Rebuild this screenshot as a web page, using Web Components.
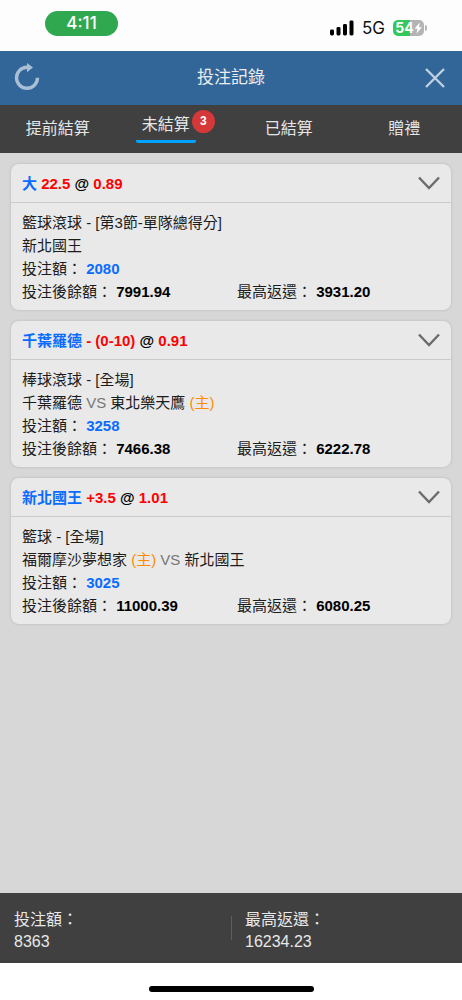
<!DOCTYPE html>
<html lang="zh-Hant">
<head>
<meta charset="utf-8">
<meta name="viewport" content="width=device-width, initial-scale=1">
<title>投注記錄</title>
<style>
  body {
    margin: 0;
    font-family: "Liberation Sans", "Noto Sans CJK TC", sans-serif;
    background: #fff;
  }
</style>
</head>
<body>
<bet-app></bet-app>

<script>
/**
 * Phone status bar: clock, signal, network and battery.
 */
class StatusBar extends HTMLElement {
  constructor () {
    super()
    this.attachShadow({ mode: 'open' })
    this.shadowRoot.innerHTML = `
      <style>
        :host {
          display: flex;
          justify-content: space-between;
          align-items: center;
          box-sizing: border-box;
          height: 51px;
          padding: 0 38px 0 45px;
          background: #fdfdfd;
          font-family: Inter, sans-serif;
          font-size: 17px;
          color: #111;
        }

        .time {
          width: 73px;
          line-height: 25px;
          margin-bottom: 4px;
          border-radius: 13px;
          background: #2fa84f;
          color: #fff;
          font-weight: 500;
          text-align: center;
        }

        .right {
          display: flex;
          align-items: center;
          gap: 8px;
          margin-top: 4px;
          line-height: 20px;
        }

        svg { display: block; }

        .battery {
          position: relative;
          width: 31px;
          height: 16px;
          border-radius: 5px;
          background: linear-gradient(90deg, #34c759 54%, #b4b4b4 54%);
          color: #fff;
          font-size: 14px;
          font-weight: 700;
          line-height: 16px;
          display: flex;
          align-items: center;
          justify-content: center;
        }

        .battery::after {
          content: "";
          position: absolute;
          right: -3px;
          top: 5px;
          width: 2px;
          height: 6px;
          border-radius: 0 2px 2px 0;
          background: #b4b4b4;
        }
      </style>
      <span class="time">4:11</span>
      <div class="right">
        <svg width="24" height="16" viewBox="0 0 24 16" aria-hidden="true">
          <rect x="0" y="9.500" width="4" height="6" rx="1.400"/>
          <rect x="6.500" y="7" width="4" height="8.500" rx="1.400"/>
          <rect x="13" y="4" width="4" height="11.500" rx="1.400"/>
          <rect x="19.500" y="0.500" width="4" height="15" rx="1.400"/>
        </svg>
        <span>5G</span>
        <div class="battery">
          <span>54</span>
          <svg width="8" height="12" viewBox="0 0 8 12" aria-hidden="true">
            <path d="M5.800 0.500 0.500 6.800h3L2.500 11.500 8 5.200H5z" fill="#fff"/>
          </svg>
        </div>
      </div>
    `
  }
}
customElements.define('status-bar', StatusBar)

/**
 * Blue title bar with a refresh and a close button.
 */
class TitleBar extends HTMLElement {
  constructor () {
    super()
    this.attachShadow({ mode: 'open' })
    this.shadowRoot.innerHTML = `
      <style>
        :host {
          display: flex;
          justify-content: space-between;
          align-items: center;
          height: 54px;
          padding: 0 12px;
          background: #326699;
          color: #ececec;
        }

        h1 {
          margin: 0;
          font-size: 17px;
          font-weight: 400;
          line-height: 24px;
        }

        button {
          width: 30px;
          height: 30px;
          padding: 0;
          border: 0;
          background: none;
          cursor: pointer;
        }

        svg { display: block; }
      </style>
      <button type="button" aria-label="重新整理">
        <svg width="30" height="30" viewBox="0 0 30 30" fill="none">
          <path d="M16 4.300H15A10.500 10.500 0 1 0 25.500 14.800" stroke="#a9bfd6" stroke-width="3.400"/>
          <path d="M15 0 21 4.500 15 9.200z" fill="#a9bfd6"/>
        </svg>
      </button>
      <h1><slot></slot></h1>
      <button type="button" aria-label="關閉">
        <svg width="30" height="30" viewBox="0 0 30 30" fill="none">
          <path d="M6 6 24 24M24 6 6 24" stroke="#bfd0e0" stroke-width="2.400"/>
        </svg>
      </button>
    `
  }
}
customElements.define('title-bar', TitleBar)

/**
 * One tab. Attributes: selected, badge.
 */
class BetTab extends HTMLElement {
  constructor () {
    super()
    this.attachShadow({ mode: 'open' })
    this.shadowRoot.innerHTML = `
      <style>
        :host {
          flex: 1;
          display: flex;
        }

        button {
          flex: 1;
          display: flex;
          justify-content: center;
          align-items: center;
          padding: 0;
          border: 0;
          background: none;
          color: #e6e6e6;
          font-family: inherit;
          font-size: 16px;
          line-height: 24px;
          cursor: pointer;
        }

        :host([selected]) .label {
          margin-bottom: 2px;
          padding: 0 6px 3px;
          border-bottom: 3px solid #00a2ff;
          border-radius: 2px;
        }

        .badge {
          width: 23px;
          line-height: 23px;
          margin: -16px -4px 0;
          border-radius: 50%;
          background: #d43838;
          color: #fff;
          font-size: 12px;
          font-weight: 700;
        }
      </style>
      <button type="button"><span class="label"><slot></slot></span></button>
    `
  }

  connectedCallback () {
    const button = this.shadowRoot.querySelector('button')
    button.setAttribute('aria-pressed', this.hasAttribute('selected'))
    if (this.hasAttribute('badge')) {
      const badge = document.createElement('span')
      badge.className = 'badge'
      badge.textContent = this.getAttribute('badge')
      button.append(badge)
    }
  }
}
customElements.define('bet-tab', BetTab)

/**
 * A bet slip card. Slots: pick (heading), default (match lines).
 * Attributes: stake, balance, payout.
 */
class BetCard extends HTMLElement {
  constructor () {
    super()
    this.attachShadow({ mode: 'open' })
    this.shadowRoot.innerHTML = `
      <style>
        :host {
          display: block;
          border-radius: 8px;
          background: #e9e9e9;
          box-shadow: 0 0 3px rgba(0, 0, 0, 0.15);
          color: #1c1c1c;
          font-size: 15px;
          line-height: 23px;
        }

        header {
          display: flex;
          justify-content: space-between;
          align-items: center;
          height: 38px;
          padding: 0 11px;
          border-bottom: 1px solid #cbcbcb;
        }

        h2 {
          margin: 0;
          font-size: 15px;
          font-weight: 700;
          color: #000;
        }

        button {
          padding: 0;
          border: 0;
          background: none;
          cursor: pointer;
        }

        svg { display: block; }

        .body { padding: 8px 11px 7px; }

        .totals {
          display: grid;
          grid-template-columns: 215px 1fr;
        }

        b { color: #000; }

        .stake { color: #0a6cff; }
      </style>
      <header>
        <h2><slot name="pick"></slot></h2>
        <button type="button" aria-label="收合">
          <svg width="22" height="14" viewBox="0 0 22 14" fill="none">
            <path d="M1 1.500 11 12 21 1.500" stroke="#6c6c6c" stroke-width="2.400"/>
          </svg>
        </button>
      </header>
      <div class="body">
        <slot></slot>
        <div>投注額： <b class="stake"></b></div>
        <div class="totals">
          <div>投注後餘額： <b class="balance"></b></div>
          <div>最高返還： <b class="payout"></b></div>
        </div>
      </div>
    `
  }

  connectedCallback () {
    for (const name of ['stake', 'balance', 'payout']) {
      this.shadowRoot.querySelector('.' + name).textContent = this.getAttribute(name)
    }
  }
}
customElements.define('bet-card', BetCard)

/**
 * Dark bar with the totals of all slips.
 */
class BetSummary extends HTMLElement {
  constructor () {
    super()
    this.attachShadow({ mode: 'open' })
    this.shadowRoot.innerHTML = `
      <style>
        :host {
          display: flex;
          align-items: center;
          height: 70px;
          background: #404040;
          color: #e8e8e8;
          font-size: 16px;
          line-height: 22px;
        }

        dl {
          flex: 1;
          margin: 0;
          padding: 6px 14px 0;
        }

        dd { margin: 0; }

        .line {
          width: 1px;
          height: 24px;
          margin-right: -1px;
          background: #5e5e5e;
        }
      </style>
      <dl><dt>投注額：</dt><dd class="stake"></dd></dl>
      <div class="line"></div>
      <dl><dt>最高返還：</dt><dd class="payout"></dd></dl>
    `
  }

  connectedCallback () {
    this.shadowRoot.querySelector('.stake').textContent = this.getAttribute('stake')
    this.shadowRoot.querySelector('.payout').textContent = this.getAttribute('payout')
  }
}
customElements.define('bet-summary', BetSummary)

/**
 * The whole bet history screen.
 */
class BetApp extends HTMLElement {
  constructor () {
    super()
    this.attachShadow({ mode: 'open' })
    this.shadowRoot.innerHTML = `
      <style>
        :host {
          display: flex;
          flex-direction: column;
          min-height: 100vh;
        }

        nav {
          display: flex;
          height: 48px;
          background: #404040;
        }

        main {
          flex: 1;
          display: flex;
          flex-direction: column;
          gap: 11px;
          padding: 11px;
          background: #d7d7d7;
        }

        .team { color: #0a6cff; }
        .odds { color: #f00; }
        .home { color: #ff8c00; }
        .vs { color: #777; }

        .home-bar {
          display: flex;
          justify-content: center;
          align-items: flex-end;
          height: 37px;
          background: #fff;
        }

        .home-bar::after {
          content: "";
          width: 165px;
          height: 6px;
          margin-bottom: 8px;
          border-radius: 3px;
          background: #000;
        }
      </style>
      <status-bar></status-bar>
      <title-bar>投注記錄</title-bar>
      <nav>
        <bet-tab>提前結算</bet-tab>
        <bet-tab selected badge="3">未結算</bet-tab>
        <bet-tab>已結算</bet-tab>
        <bet-tab>贈禮</bet-tab>
      </nav>
      <main>
        <bet-card stake="2080" balance="7991.94" payout="3931.20">
          <span slot="pick"><span class="team">大</span> <span class="odds">22.5</span> @ <span class="odds">0.89</span></span>
          <div>籃球滾球 - [第3節-單隊總得分]</div>
          <div>新北國王</div>
        </bet-card>
        <bet-card stake="3258" balance="7466.38" payout="6222.78">
          <span slot="pick"><span class="team">千葉羅德</span> <span class="odds">- (0-10)</span> @ <span class="odds">0.91</span></span>
          <div>棒球滾球 - [全場]</div>
          <div>千葉羅德 <span class="vs">VS</span> 東北樂天鷹 <span class="home">(主)</span></div>
        </bet-card>
        <bet-card stake="3025" balance="11000.39" payout="6080.25">
          <span slot="pick"><span class="team">新北國王</span> <span class="odds">+3.5</span> @ <span class="odds">1.01</span></span>
          <div>籃球 - [全場]</div>
          <div>福爾摩沙夢想家 <span class="home">(主)</span> <span class="vs">VS</span> 新北國王</div>
        </bet-card>
      </main>
      <bet-summary stake="8363" payout="16234.23"></bet-summary>
      <div class="home-bar"></div>
    `
  }
}
customElements.define('bet-app', BetApp)
</script>
</body>
</html>
